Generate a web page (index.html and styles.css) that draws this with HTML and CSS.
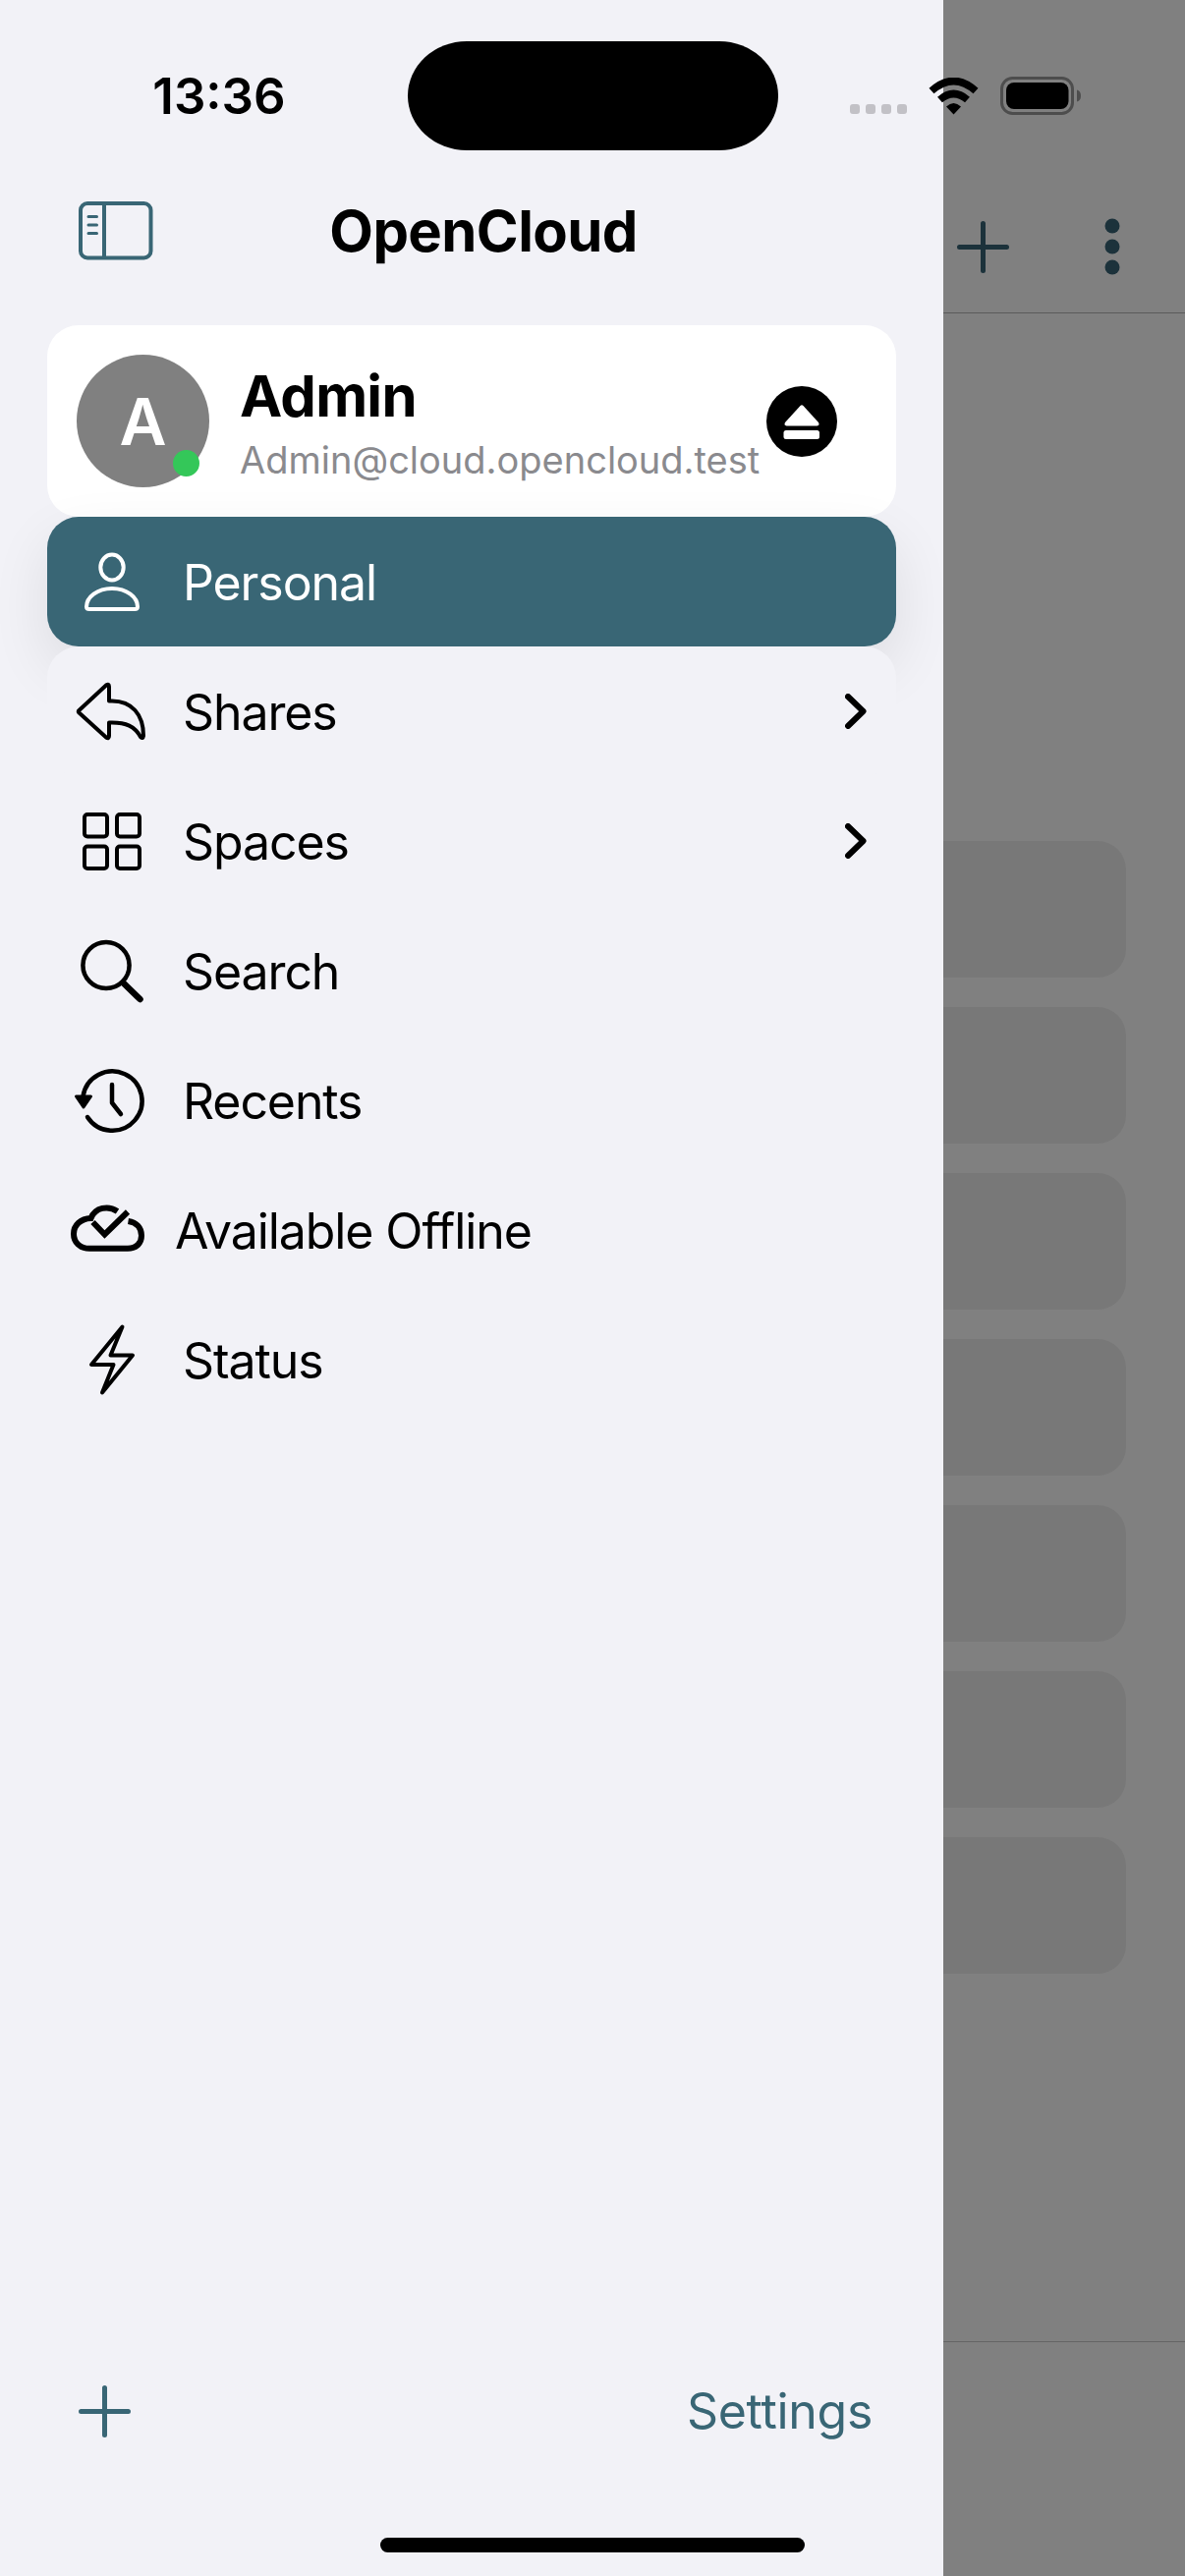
FILE: index.html
```html
<!DOCTYPE html>
<html lang="en">
<head>
<meta charset="utf-8">
<title>OpenCloud</title>
<link rel="stylesheet" href="styles.css">
</head>
<body>
<div class="screen">
  <aside class="drawer">
    <header class="drawer-header">
      <svg class="toggle" width="76" height="60" viewBox="0 0 76 60" fill="none" stroke="currentColor">
        <rect x="2" y="2" width="71.5" height="55.5" rx="7" stroke-width="4"/>
        <path d="M26 2v56" stroke-width="4"/>
        <path d="M10 15.500h8.500M10 24h8.500M10 32.500h8.500" stroke-width="3" stroke-linecap="round"/>
      </svg>
      <h1 class="title">OpenCloud</h1>
    </header>
    <section class="account">
      <div class="avatar">A<i class="online"></i></div>
      <div class="identity">
        <div class="name">Admin</div>
        <div class="email">Admin@cloud.opencloud.test</div>
      </div>
      <svg class="eject" width="72" height="72" viewBox="0 0 72 72">
        <circle cx="36" cy="36" r="36"/>
        <path d="M34.500 20q1.500-1.500 3 0L53 37q1.500 3-1.500 3.500h-31q-3-.5-1.500-3.500z" fill="#fff"/>
        <rect x="17.500" y="45" width="36.500" height="9" rx="2.500" fill="#fff"/>
      </svg>
    </section>
    <nav class="menu">
      <a class="item selected">
        <svg class="icon" viewBox="0 0 80 80" fill="none" stroke="currentColor" stroke-width="4">
          <ellipse cx="40" cy="25.500" rx="11.700" ry="13"/>
          <path d="M14 65.500C14 56 25 47 40 47s26 9 26 18.500q0 2.500-3 2.500H17q-3 0-3-2.500z"/>
        </svg>
        <span class="label">Personal</span>
      </a>
      <a class="item first">
        <svg class="icon" viewBox="0 0 80 80" fill="none" stroke="currentColor" stroke-width="4" stroke-linejoin="round">
          <path d="M6.500 39L34 13.500Q37 11.500 37 15v14.500h3C60 29.500 72 43 72 65q-.5 3.500-3 1C63 55 54 51.500 40 51.500h-3V65q0 3.500-3 1.500L6.500 41.500Q5 40 6.500 39z"/>
        </svg>
        <span class="label">Shares</span>
        <svg class="chevron" viewBox="0 0 22 36"><path d="M3 3l15.500 15L3 33"/></svg>
      </a>
      <a class="item">
        <svg class="icon" viewBox="0 0 80 80" fill="none" stroke="currentColor" stroke-width="4">
          <rect x="12" y="13" width="23" height="22.500" rx="3"/><rect x="45" y="13" width="23" height="22.500" rx="3"/>
          <rect x="12" y="45.500" width="23" height="22.500" rx="3"/><rect x="45" y="45.500" width="23" height="22.500" rx="3"/>
        </svg>
        <span class="label">Spaces</span>
        <svg class="chevron" viewBox="0 0 22 36"><path d="M3 3l15.500 15L3 33"/></svg>
      </a>
      <a class="item">
        <svg class="icon" viewBox="0 0 80 80" fill="none" stroke="currentColor" stroke-linecap="round">
          <circle cx="34" cy="34.500" r="23.600" stroke-width="4.500"/><path d="M51.500 52.500L68.500 69" stroke-width="6.500"/>
        </svg>
        <span class="label">Search</span>
      </a>
      <a class="item">
        <svg class="icon" viewBox="0 0 80 80" fill="none" stroke="currentColor" stroke-width="4.500" stroke-linecap="round" stroke-linejoin="round">
          <path d="M10.500 36A30.200 30.200 0 1 1 15 57"/>
          <path d="M40 24v18.500L49 54" stroke-width="4.500"/>
          <path d="M3.500 36h15L11 47z" fill="currentColor" stroke-width="3"/>
        </svg>
        <span class="label">Recents</span>
      </a>
      <a class="item wide">
        <svg class="icon" viewBox="0 0 80 80" fill="none" stroke="currentColor" stroke-width="6">
          <path d="M45.500 21C36 14.500 23 17 18.500 28 8 28.500 1 35 1 44c0 8.500 6.500 14.800 16 14.800h39c9 0 14-5.800 14-13 0-8-5-13.500-13.500-14.800"/>
          <path d="M20.500 32l12 12.500L56 21.500"/>
        </svg>
        <span class="label">Available Offline</span>
      </a>
      <a class="item">
        <svg class="icon" viewBox="0 0 80 80" fill="none" stroke="currentColor" stroke-width="4" stroke-linejoin="round">
          <path d="M50.500 6.500L19 45h22.500L30 73.500 61 35.500H38.500z"/>
        </svg>
        <span class="label">Status</span>
      </a>
    </nav>
    <footer class="drawer-footer">
      <svg class="plus" viewBox="0 0 53 53"><path d="M26.500 2.500v48M2.500 26.500h48"/></svg>
      <a class="settings">Settings</a>
    </footer>
  </aside>
  <main class="detail">
    <header class="toolbar">
      <svg class="plus" viewBox="0 0 53 53"><path d="M26.500 2.500v48M2.500 26.500h48"/></svg>
      <svg class="more" viewBox="0 0 16 58"><circle cx="8" cy="8" r="7.500"/><circle cx="8" cy="29" r="7.500"/><circle cx="8" cy="50" r="7.500"/></svg>
    </header>
    <div class="rows">
      <div class="row"></div><div class="row"></div><div class="row"></div><div class="row"></div>
      <div class="row"></div><div class="row"></div><div class="row"></div>
    </div>
    <footer class="bottom-bar"></footer>
  </main>
  <div class="status-bar">
    <div class="time">13:36</div>
    <div class="island"></div>
    <div class="indicators">
      <div class="signal"><i></i><i></i><i></i><i></i></div>
      <svg class="wifi" width="52" height="38" viewBox="0 0 52 38">
        <g fill="none" stroke="#000">
          <path d="M3 13.500Q25.500-6.500 48 13.500" stroke-width="7.500"/>
          <path d="M11.500 22.500Q25.500 10.500 39.500 22.500" stroke-width="7.500"/>
        </g>
        <path d="M18 29.500Q25.500 22.500 33 29.500L25.500 37.500z"/>
      </svg>
      <svg class="battery" width="84" height="40" viewBox="0 0 84 40">
        <rect x="1.500" y="1.500" width="72" height="36" rx="11" fill="none" stroke="#4d4d4d" stroke-width="3"/>
        <rect x="6" y="6" width="63.500" height="27" rx="8"/>
        <path d="M78 13.500q4 1 4 6t-4 6z" fill="#4d4d4d"/>
      </svg>
    </div>
  </div>
  <div class="home"></div>
</div>
</body>
</html>
```
FILE: styles.css
```css
* { box-sizing: border-box; }
body { margin: 0; font-family: Inter, "Liberation Sans", sans-serif; color: #000; }
.screen { position: relative; display: flex; width: 1206px; height: 2622px; overflow: hidden; background: #808080; }
svg { display: block; flex: none; }

.drawer { display: flex; flex-direction: column; width: 960px; flex: none; padding: 0 48px; background: #f2f2f7; }
.drawer-header { display: grid; grid-template-columns: 144px 1fr 120px; align-items: center; height: 331px; padding: 138px 0 0; }
.toggle { margin-left: 32px; color: #396675; }
.title { margin: 0; text-align: center; font-size: 58px; line-height: 70px; font-weight: 700; letter-spacing: -.6px; }

.account { display: flex; align-items: center; height: 195px; padding: 0 60px 0 30px; border-radius: 32px; background: #fff; }
.avatar { position: relative; flex: none; width: 135px; height: 135px; border-radius: 50%; background: #808080; color: #fff; font-size: 66px; font-weight: 600; line-height: 137px; text-align: center; }
.online { position: absolute; left: 98px; top: 97px; width: 27px; height: 27px; border-radius: 50%; background: #34c759; }
.identity { flex: 1; padding: 8px 0 0 31px; white-space: nowrap; }
.name { font-size: 58px; line-height: 70px; font-weight: 700; letter-spacing: -.7px; }
.email { font-size: 38px; line-height: 60px; color: #8a8a8e; }
.eject { margin-left: auto; }

.menu { display: flex; flex-direction: column; }
.item { display: flex; align-items: center; height: 132px; padding: 0 30px 0 26px; border-radius: 32px; }
.selected { background: #396675; color: #fff; box-shadow: 0 24px 60px rgba(0, 0, 0, .09); }
.first { background: #f2f2f7; }
.icon { width: 80px; height: 80px; overflow: visible; }
.label { margin-left: 32px; padding-top: 2px; font-size: 50px; line-height: 60px; white-space: nowrap; letter-spacing: -1.1px; }
.wide .label { margin-left: 24px; }
.chevron { width: 22px; height: 36px; margin-left: auto; fill: none; stroke: #000; stroke-width: 6; stroke-linecap: round; stroke-linejoin: round; }

.drawer-footer { display: flex; align-items: center; justify-content: space-between; margin-top: auto; height: 336px; padding: 0 24px 0 32px; color: #396675; }
.plus { width: 53px; height: 53px; fill: none; stroke: currentColor; stroke-width: 5; stroke-linecap: round; }
.settings { font-size: 50px; line-height: 60px; letter-spacing: -.3px; }

.detail { display: flex; flex-direction: column; flex: 1; }
.toolbar { display: flex; justify-content: space-between; height: 319px; padding: 222px 66px 0 14px; border-bottom: 1px solid #5a5a5a; color: #1c323b; }
.toolbar .plus { margin-top: 3px; }
.more { width: 16px; height: 58px; fill: currentColor; }
.rows { display: flex; flex-direction: column; gap: 30px; padding: 537px 60px 0 0; }
.row { height: 139px; border-radius: 0 29px 29px 0; background: #787878; }
.bottom-bar { margin-top: auto; height: 239px; border-top: 1px solid #646464; }

.status-bar { position: absolute; inset: 0 0 auto; display: grid; grid-template-columns: 415px 377px 1fr; align-items: start; }
.time { padding: 67px 0 0 31px; font-size: 51px; line-height: 62px; font-weight: 600; text-align: center; }
.island { height: 111px; margin-top: 41.500px; border-radius: 60px / 55.500px; background: #000; }
.indicators { display: flex; padding: 78px 0 0 73px; }
.signal { display: flex; gap: 6px; padding-top: 28px; }
.signal i { width: 10px; height: 10px; border-radius: 3px; background: #c2c1c6; }
.wifi { margin: 1px 0 0 22px; }
.battery { margin-left: 21px; }
.home { position: absolute; left: 387px; top: 2583px; width: 432px; height: 15px; border-radius: 8px; background: #000; }
```
